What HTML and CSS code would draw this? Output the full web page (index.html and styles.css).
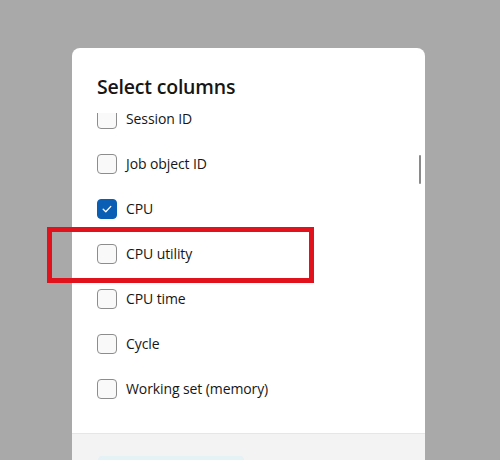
FILE: index.html
```html
<!DOCTYPE html>
<html lang="en">
<head>
    <meta charset="UTF-8">
    <meta name="viewport" content="width=device-width, initial-scale=1.0">
    <title>Select columns</title>
    <link rel="stylesheet" href="styles.css">
</head>
<body>
    <div class="dialog">
        <h2 class="title">Select columns</h2>
        <div class="list">
            <div class="list-inner">
                <!-- first row is scrolled partly out of view -->
                <label class="row"><span class="box-clip"><span class="box"></span></span><span class="label">Session ID</span></label>
                <label class="row"><span class="box"></span><span class="label">Job object ID</span></label>
                <label class="row"><span class="box checked">
                    <svg width="12" height="12" viewBox="0 0 12 12"><path d="M2.2 6.3 L4.8 8.8 L9.8 3.4" fill="none" stroke="#fff" stroke-width="1.3" stroke-linecap="round" stroke-linejoin="round"/></svg>
                </span><span class="label">CPU</span></label>
                <label class="row"><span class="box"></span><span class="label">CPU utility</span></label>
                <label class="row"><span class="box"></span><span class="label">CPU time</span></label>
                <label class="row"><span class="box"></span><span class="label">Cycle</span></label>
                <label class="row"><span class="box"></span><span class="label">Working set (memory)</span></label>
            </div>
            <div class="scrollbar"></div>
        </div>
        <div class="footer">
            <div class="primary"></div>
        </div>
    </div>
    <div class="highlight"></div>
</body>
</html>
```

FILE: styles.css
```css
html, body {
    margin: 0;
    height: 100%;
    overflow: hidden;
}

body {
    background-color: #a9a9a9;
    font-family: "Open Sans", "Noto Sans", sans-serif;
    color: #161616;
    position: relative;
}

.dialog {
    margin: 48px 0 0 72px;
    width: 353px;
    height: 460px;
    background-color: #fff;
    border-radius: 8px 8px 0 0;
    display: flex;
    flex-direction: column;
}

.title {
    margin: 0;
    padding: 25px 0 0 25px;
    height: 35px;
    font-size: 19.5px;
    font-weight: 600;
    line-height: 27px;
    letter-spacing: -0.2px;
}

.list {
    position: relative;
    height: 325px;
    overflow: hidden;
}

.list-inner {
    margin-top: -12px;
}

.row {
    display: flex;
    align-items: center;
    height: 45px;
    padding-left: 25px;
    font-size: 14px;
    letter-spacing: -0.1px;
    gap: 9px;
}

.label {
    line-height: 19px;
}

.box {
    width: 18px;
    height: 18px;
    flex: none;
    border: 1px solid #8d8d8d;
    border-radius: 4px;
    background-color: #f9f9f9;
    display: flex;
    align-items: center;
    justify-content: center;
}

.box-clip {
    height: 16px;
    margin-top: 4px;
    overflow: hidden;
    display: flex;
    align-items: flex-end;
}

.box.checked {
    background-color: #0a5fb4;
    border-color: #0a5fb4;
}

.scrollbar {
    position: absolute;
    right: 4px;
    top: 47px;
    width: 2px;
    height: 29px;
    border-radius: 1px;
    background-color: #8a8a8a;
}

.footer {
    flex: 1;
    background-color: #f3f3f3;
    border-top: 1px solid #e6e6e6;
    padding: 22px 0 0 26px;
}

.primary {
    width: 146px;
    height: 32px;
    border-radius: 4px;
    background-color: #e4f1f5;
}

.highlight {
    position: absolute;
    left: 47px;
    top: 227px;
    width: 257px;
    height: 46px;
    border: 5px solid #e1121b;
}
```
